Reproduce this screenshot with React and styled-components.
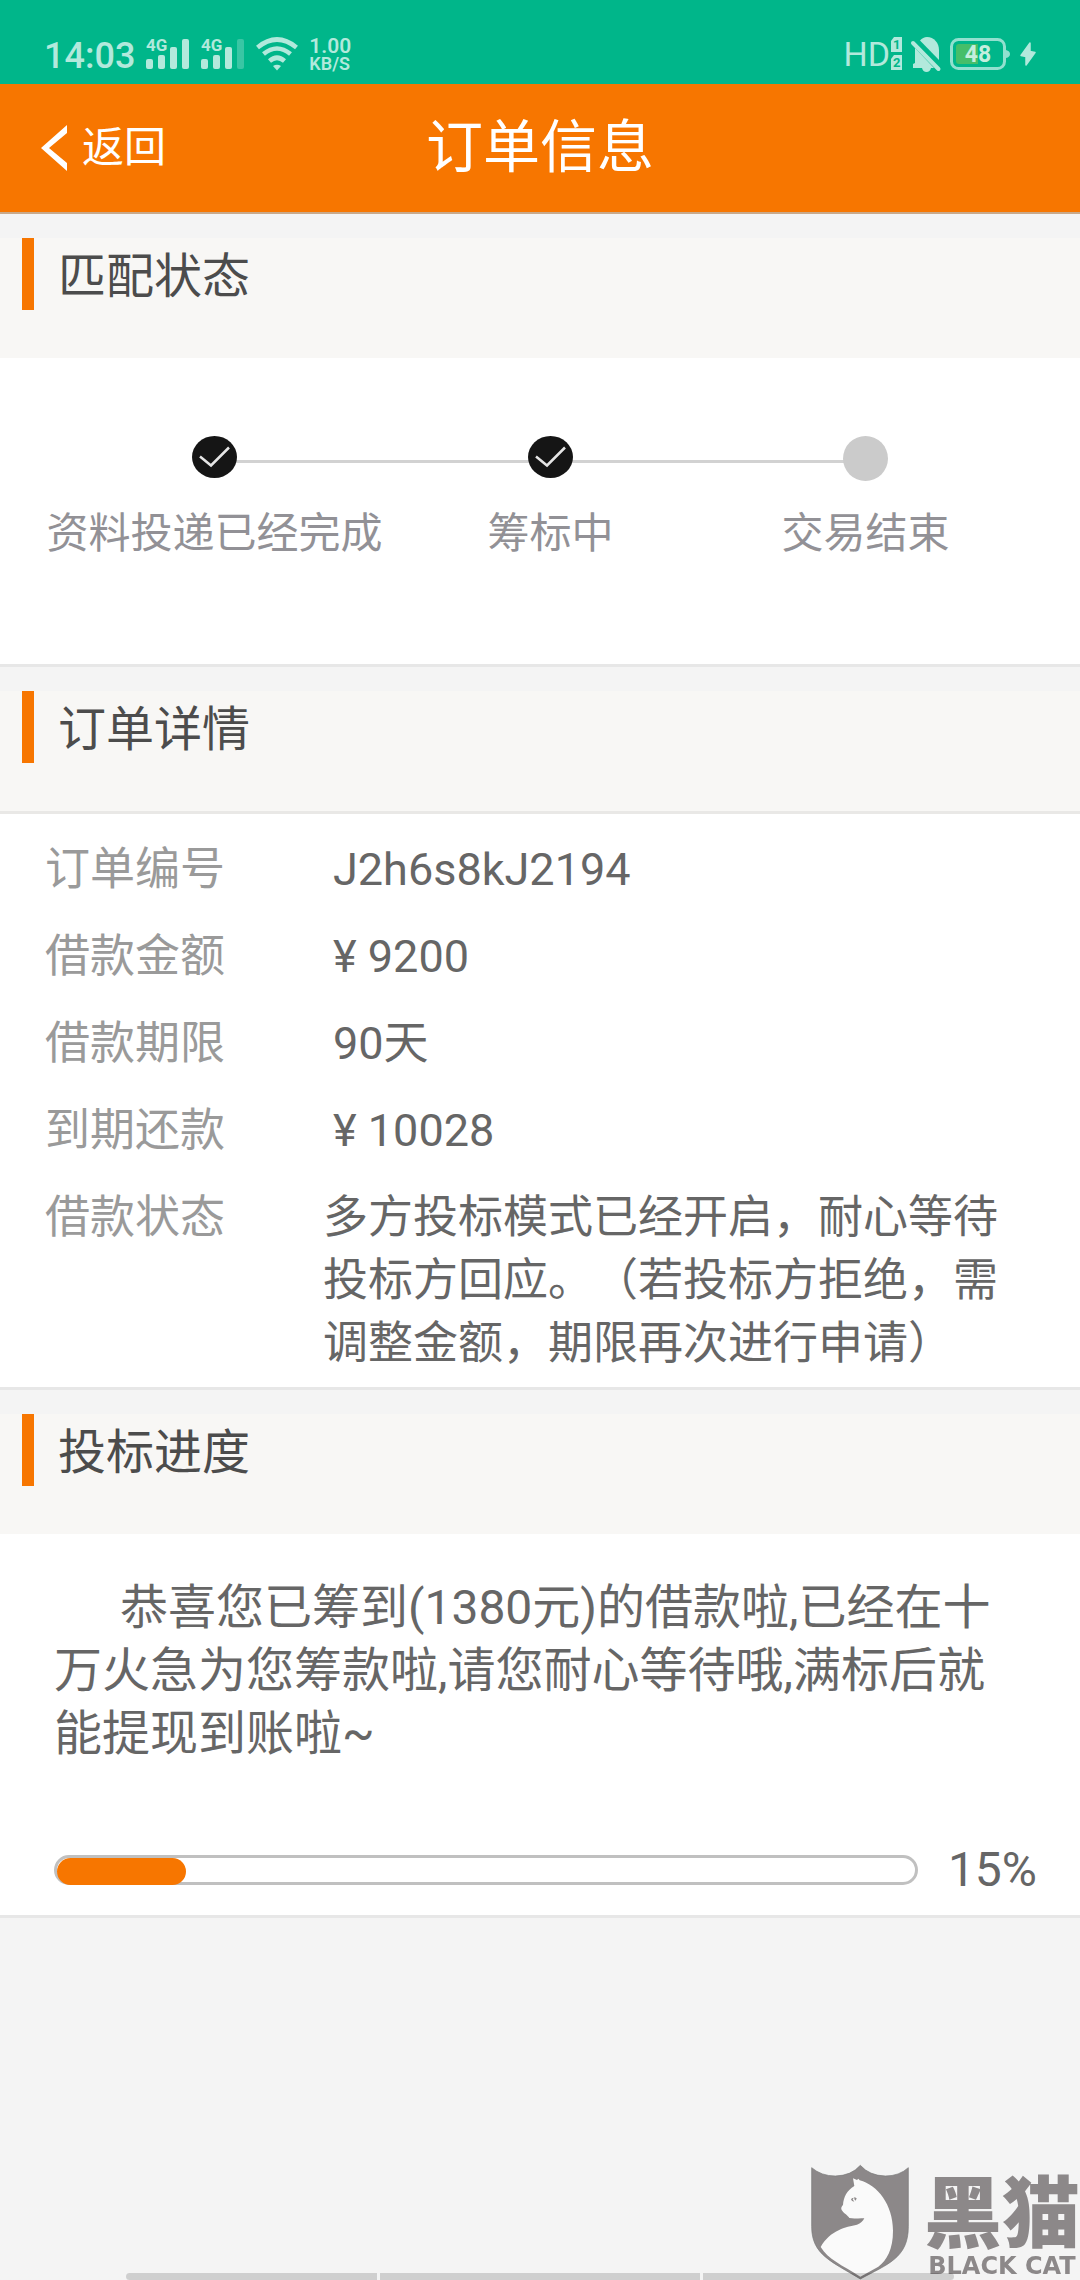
import styled, { createGlobalStyle } from "styled-components";

const GlobalStyle = createGlobalStyle`
  * {
    box-sizing: border-box;
  }

  body {
    margin: 0;
    background-color: #f4f4f4;
    font-family: Roboto, "Noto Sans CJK SC", sans-serif;
    text-spacing-trim: space-all;
  }
`;

const steps = [
  { label: "资料投递已经完成", done: true },
  { label: "筹标中", done: true },
  { label: "交易结束", done: false },
];

const details = [
  { label: "订单编号", value: "J2h6s8kJ2194" },
  { label: "借款金额", value: "¥ 9200" },
  { label: "借款期限", value: "90天" },
  { label: "到期还款", value: "¥ 10028" },
  {
    label: "借款状态",
    value:
      "多方投标模式已经开启，耐心等待投标方回应。（若投标方拒绝，需调整金额，期限再次进行申请）",
    long: true,
  },
];

const percent = 15;

const PageContainer = styled.div`
  min-height: 100vh;
  background-color: #f4f4f4;
`;

/* 상태 표시줄 */
const StatusBar = styled.div`
  height: 84px;
  padding: 24px 44px 0;
  display: flex;
  justify-content: space-between;
  align-items: center;
  background-color: #00b68a;
  color: #b2e9dc;
`;

const StatusGroup = styled.div`
  display: flex;
  align-items: center;
  gap: ${({ $gap }) => $gap}px;

  svg {
    display: block;
    flex-shrink: 0;
    overflow: visible;
  }
`;

const Clock = styled.span`
  padding-top: 4px;
  font-size: 36px;
  font-weight: 500;
  line-height: 40px;
`;

const Speed = styled.span`
  display: flex;
  flex-direction: column;
  font-size: 18px;
  font-weight: 600;
  line-height: 17px;
`;

const SpeedValue = styled.span`
  font-size: 21px;
  line-height: 18px;
`;

const HdMark = styled.div`
  display: flex;
  align-items: center;
  gap: 1px;
  font-size: 34px;
  line-height: 40px;
`;

/* 헤더 */
const Header = styled.header`
  display: grid;
  grid-template-columns: 1fr auto 1fr;
  align-items: center;
  height: 130px;
  padding: 0 40px;
  background-color: #f77600;
  border-bottom: 2px solid #c9a98a;
  color: #fff;
`;

const BackButton = styled.button`
  display: flex;
  align-items: center;
  gap: 14px;
  justify-self: start;
  padding: 0;
  border: none;
  background: none;
  color: inherit;
  font-family: inherit;
  font-size: 42px;
  line-height: 60px;
  cursor: pointer;
`;

const Title = styled.h1`
  margin: 0;
  font-size: 57px;
  font-weight: 400;
  line-height: 72px;
`;

const Section = styled.section`
  margin-top: 24px;
`;

const SectionHeader = styled.div`
  height: ${({ $line }) => ($line ? 123 : 120)}px;
  padding-left: 22px;
  background-color: #f8f7f5;
  border-bottom: ${({ $line }) => ($line ? "3px solid #e9e8e6" : "none")};
`;

const SectionTitle = styled.h2`
  margin: 0;
  padding: 6px 0 0 24px;
  border-left: 12px solid #f77600;
  color: #4c4c4c;
  font-size: 48px;
  font-weight: 400;
  line-height: 66px;
`;

const SectionBody = styled.div`
  background-color: #fff;
  border-bottom: 3px solid #e7e7e7;
`;

/* 진행 단계 */
const StepList = styled.ol`
  position: relative;
  display: grid;
  grid-template-columns: 429fr 243fr 387fr;
  margin: 0;
  padding: 78px 21px 99px 0;
  list-style: none;

  &::before {
    content: "";
    position: absolute;
    top: 102px;
    left: 20%;
    right: 20%;
    height: 3px;
    background-color: #d2d2d2;
  }
`;

const Step = styled.li`
  position: relative;
  display: flex;
  flex-direction: column;
  align-items: center;
  gap: 21px;
  color: #929196;
  font-size: 42px;
  line-height: 63px;
  white-space: nowrap;

  svg {
    display: block;
  }
`;

/* 주문 상세 */
const DetailList = styled.dl`
  margin: 0;
  padding: 24px 80px 12px 45px;
`;

const DetailRow = styled.div`
  display: flex;
  margin-bottom: ${({ $long }) => ($long ? 0 : 24)}px;
  font-size: 45px;
  line-height: 63px;
`;

const DetailLabel = styled.dt`
  flex: none;
  width: 278px;
  color: #9a9a9a;
`;

const DetailValue = styled.dd`
  flex: 1;
  margin: 0;
  padding-left: ${({ $long }) => ($long ? 0 : 10)}px;
  color: #666;
`;

/* 입찰 진행률 */
const BidBody = styled.div`
  padding: 42px 43px 14px 54px;
  color: #666;
  font-size: 48px;
  line-height: 63px;
`;

const BidText = styled.p`
  margin: 0 12px 73px 0;
  text-indent: 66px;
`;

const ProgressRow = styled.div`
  display: flex;
  align-items: center;
  gap: 30px;
`;

const ProgressTrack = styled.div`
  flex: 1;
  height: 30px;
  border: 3px solid #c0c0c0;
  border-radius: 15px;
`;

const ProgressFill = styled.div`
  height: 27px;
  border-radius: 14px;
  background-color: #f77600;
`;

/* 워터마크 */
const Watermark = styled.div`
  position: fixed;
  right: 0;
  bottom: 0;
  display: flex;
  align-items: flex-end;
  gap: 15px;
  color: #8c8889;
`;

const WatermarkText = styled.div`
  display: flex;
  flex-direction: column;
  align-items: center;
  gap: 4px;
`;

const WatermarkName = styled.span`
  font-family: "Noto Sans CJK SC", sans-serif;
  font-size: 78px;
  font-weight: 900;
  line-height: 80px;
`;

const WatermarkSub = styled.span`
  font-family: "DejaVu Sans", sans-serif;
  font-size: 24px;
  font-weight: 700;
  line-height: 28px;
  white-space: nowrap;
`;

const NavHint = styled.div`
  position: fixed;
  bottom: 0;
  left: 126px;
  right: 126px;
  display: grid;
  grid-template-columns: 251fr 320fr 251fr;
  gap: 3px;
  height: 7px;
  overflow: hidden;
  border-radius: 4px;

  span {
    background-color: rgba(0, 0, 0, 0.15);
  }
`;

function SignalIcon({ weak }) {
  return (
    <svg width="44" height="32" viewBox="0 0 44 32" fill="currentColor">
      <text x="0" y="13" fontSize="17" fontWeight="700" fontFamily="Roboto">
        4G
      </text>
      <rect x="0" y="21" width="7" height="10" rx="2" />
      <rect x="12" y="17" width="7" height="14" rx="2" />
      <rect x="24" y="9" width="7" height="22" rx="2" />
      <rect
        x="36"
        y="1"
        width="7"
        height="30"
        rx="2"
        opacity={weak ? 0.32 : 1}
      />
    </svg>
  );
}

function WifiIcon() {
  return (
    <svg width="42" height="34" viewBox="0 0 42 34" fill="none">
      <g stroke="currentColor" strokeWidth="4.6">
        <path d="M1.5 10.5 Q21 -5.5 40.5 10.5" />
        <path d="M7.5 17 Q21 6 34.5 17" />
        <path d="M13.5 24 Q21 17.5 28.5 24" />
      </g>
      <path d="M17 29 Q21 26.5 25 29 L21 33.5Z" fill="currentColor" />
    </svg>
  );
}

function SimIcon() {
  return (
    <svg width="11" height="34" viewBox="0 0 11 34">
      <path d="M3 0H11V15H0V4Z M3 18H11V33H0V22Z" fill="currentColor" />
      <g fontSize="13" fontWeight="700" fontFamily="Roboto" fill="#00b68a">
        <text x="2" y="12">
          1
        </text>
        <text x="2" y="30">
          2
        </text>
      </g>
    </svg>
  );
}

function MuteIcon() {
  return (
    <svg width="30" height="35" viewBox="0 0 30 35" fill="currentColor">
      <path d="M9 3.5 Q12 0 16 0 C23 0 28 6 28 13 V23Z" />
      <path d="M4 11 L23 31 H20 Q19 35 15.5 35 Q12 35 11 31 H2 V27 L4 26Z" />
      <path
        d="M2 6 L27.5 32"
        stroke="currentColor"
        strokeWidth="4"
        strokeLinecap="round"
      />
    </svg>
  );
}

function BatteryIcon() {
  return (
    <svg width="61" height="32" viewBox="0 0 61 32">
      <rect
        x="1.5"
        y="1.5"
        width="53"
        height="29"
        rx="7"
        fill="none"
        stroke="#92e0cf"
        strokeWidth="3"
      />
      <path d="M56 12 Q60 13 60 16 Q60 19 56 20Z" fill="#92e0cf" />
      <path d="M9 6H28V26H9Q6 26 6 23V9Q6 6 9 6Z" fill="#45be69" />
      <text
        x="28"
        y="24"
        textAnchor="middle"
        fontSize="23"
        fontWeight="700"
        fontFamily="Roboto"
        fill="#c4eedd"
      >
        48
      </text>
    </svg>
  );
}

function BoltIcon() {
  return (
    <svg width="16" height="24" viewBox="0 0 16 24" fill="currentColor">
      <path
        d="M10 1 L10 9.5 L15 10.5 L6 23 L6 14.5 L1 13.5Z"
        stroke="currentColor"
        strokeWidth="1.5"
        strokeLinejoin="round"
      />
    </svg>
  );
}

function StepIcon({ done }) {
  return (
    <svg width="45" height="45" viewBox="0 0 45 45">
      {done ? (
        <>
          <ellipse cx="22.5" cy="21" rx="22.5" ry="21" fill="#151515" />
          <path
            d="M8 20.5 L19 29.5 L37 11.5"
            fill="none"
            stroke="#e6e6e6"
            strokeWidth="2.5"
          />
        </>
      ) : (
        <circle cx="22.5" cy="22.5" r="22.5" fill="#cbcbcb" />
      )}
    </svg>
  );
}

function ShieldLogo() {
  return (
    <svg width="98" height="116" viewBox="92 102 294 348">
      <path
        d="M94 113 Q123 138 165 138 Q213 137 240 106 Q267 137 315 138 Q357 138 384 113 V290 C384 385 320 403 240 447 C155 395 94 375 94 290Z"
        fill="#8c8889"
        stroke="#777"
        strokeWidth="2"
      />
      <path
        d="M218 145 L230 150 L234 146 L238 151 C292 165 338 225 338 302 C338 358 320 390 294 410 L240 440 C185 405 143 388 121 351 C150 300 196 291 230 284 C241 280 248 273 252 265 C238 263 226 267 207 264 C203 256 191 251 184 240 C181 234 184 229 188 225 C190 200 200 182 222 168Z"
        fill="#fafafa"
      />
      <path
        d="M212 208 Q214 203 220 203 L217 209 L222 214 Q214 216 212 208Z M222 201 L229 205 L226 212 L222 208Z"
        fill="#8c8889"
      />
    </svg>
  );
}

export default function OrderInfo() {
  return (
    <PageContainer>
      <GlobalStyle />
      <StatusBar>
        <StatusGroup $gap={11}>
          <Clock>14:03</Clock>
          <SignalIcon />
          <SignalIcon weak />
          <WifiIcon />
          <Speed>
            <SpeedValue>1.00</SpeedValue>
            KB/S
          </Speed>
        </StatusGroup>
        <StatusGroup $gap={9}>
          <HdMark>
            HD
            <SimIcon />
          </HdMark>
          <MuteIcon />
          <BatteryIcon />
          <BoltIcon />
        </StatusGroup>
      </StatusBar>

      <Header>
        <BackButton type="button">
          <svg width="28" height="46" viewBox="0 0 28 46" fill="#fff">
            <path d="M27 0V8L9 23L27 38V46L1 23Z" />
          </svg>
          返回
        </BackButton>
        <Title>订单信息</Title>
      </Header>

      <Section>
        <SectionHeader>
          <SectionTitle>匹配状态</SectionTitle>
        </SectionHeader>
        <SectionBody>
          <StepList>
            {steps.map((step) => (
              <Step key={step.label}>
                <StepIcon done={step.done} />
                {step.label}
              </Step>
            ))}
          </StepList>
        </SectionBody>
      </Section>

      <Section>
        <SectionHeader $line>
          <SectionTitle>订单详情</SectionTitle>
        </SectionHeader>
        <SectionBody>
          <DetailList>
            {details.map((item) => (
              <DetailRow key={item.label} $long={item.long}>
                <DetailLabel>{item.label}</DetailLabel>
                <DetailValue $long={item.long}>{item.value}</DetailValue>
              </DetailRow>
            ))}
          </DetailList>
        </SectionBody>
      </Section>

      <Section>
        <SectionHeader>
          <SectionTitle>投标进度</SectionTitle>
        </SectionHeader>
        <SectionBody>
          <BidBody>
            <BidText>
              恭喜您已筹到(1380元)的借款啦,已经在十万火急为您筹款啦,请您耐心等待哦,满标后就能提现到账啦~
            </BidText>
            <ProgressRow>
              <ProgressTrack
                role="progressbar"
                aria-label="投标进度"
                aria-valuenow={percent}
                aria-valuemin={0}
                aria-valuemax={100}
              >
                <ProgressFill style={{ width: `${percent}%` }} />
              </ProgressTrack>
              <span>{percent}%</span>
            </ProgressRow>
          </BidBody>
        </SectionBody>
      </Section>

      <Watermark>
        <ShieldLogo />
        <WatermarkText>
          <WatermarkName>黑猫</WatermarkName>
          <WatermarkSub>BLACK CAT</WatermarkSub>
        </WatermarkText>
      </Watermark>
      <NavHint>
        <span />
        <span />
        <span />
      </NavHint>
    </PageContainer>
  );
}
